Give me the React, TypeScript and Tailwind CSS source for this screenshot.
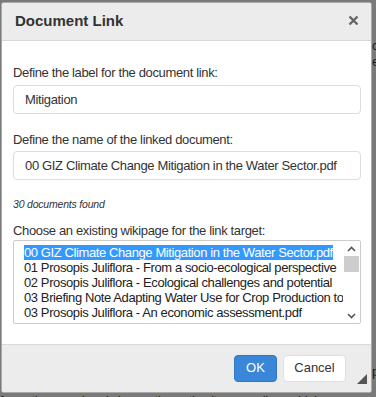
import React from "react";

const items = [
  "00 GIZ Climate Change Mitigation in the Water Sector.pdf",
  "01 Prosopis Juliflora - From a socio-ecological perspective",
  "02 Prosopis Juliflora - Ecological challenges and potential",
  "03 Briefing Note Adapting Water Use for Crop Production to",
  "03 Prosopis Juliflora - An economic assessment.pdf",
  "04 Briefing Note Effective Agricultural Water Management F",
];

export default function App() {
  return (
    <div
      className="relative w-[376px] h-[397px] overflow-hidden bg-[#7a7a7a]"
      style={{ fontFamily: '"Liberation Sans", Arial, sans-serif' }}
    >
      {/* background page text under overlay */}
      <div className="absolute left-0 top-[391px] whitespace-nowrap text-[13px] tracking-[-0.35px] text-[#1a1a1a]">
        formation panel and choose the option 'temporarily enable'
      </div>
      <div className="absolute left-[372px] top-[38px] whitespace-nowrap text-[13px] leading-[16px] text-[#1a1a1a]">
        c<br />e
      </div>
      <div className="absolute left-[372px] top-[362px] whitespace-nowrap text-[13px] text-[#1a1a1a]">p</div>

      <div className="absolute left-[1px] top-[2px] w-[371px] h-[391px] flex flex-col bg-white border border-[#aaa] rounded-[3px] overflow-hidden">
        {/* Title bar */}
        <div className="h-[38px] shrink-0 flex items-center justify-between bg-[#ececec] border-b border-[#d8d8d8] pl-[13px] pr-[12px]">
          <span className="text-[15px] font-bold text-[#333]">Document Link</span>
          <svg width="11" height="11" viewBox="0 0 11 11" className="mt-[-2px]">
            <path d="M1.5 1.5 L9.5 9.5 M9.5 1.5 L1.5 9.5" stroke="#666" strokeWidth="2.4" strokeLinecap="butt" />
          </svg>
        </div>

        {/* Body */}
        <div className="flex-1 flex flex-col pl-[11px] pr-[10px] pt-[24px] text-[#333] tracking-[-0.35px]">
          <label className="text-[13px] leading-[16px]">Define the label for the document link:</label>
          <div className="mt-[4px] h-[29px] flex items-center border border-[#ddd] rounded-[4px] px-[11px] text-[13px]">
            Mitigation
          </div>

          <label className="mt-[18px] text-[13px] leading-[16px]">Define the name of the linked document:</label>
          <div className="mt-[3px] h-[29px] flex items-center border border-[#ddd] rounded-[4px] px-[11px] text-[13px] whitespace-nowrap">
            00 GIZ Climate Change Mitigation in the Water Sector.pdf
          </div>

          <div className="mt-[18px] text-[10.5px] italic leading-[12px] text-[#333] tracking-[-0.2px]">30 documents found</div>

          <label className="mt-[13px] text-[13px] leading-[16px]">Choose an existing wikipage for the link target:</label>
          <div className="mt-[1px] h-[84px] flex border border-[#ccc] rounded-[2px] overflow-hidden">
            <div className="flex-1 overflow-hidden pl-[10px] pt-[4px]">
              {items.map((t, i) => (
                <div
                  key={i}
                  className={
                    "h-[15px] leading-[15px] text-[13px] tracking-[-0.4px] whitespace-nowrap " +
                    (i === 0 ? "" : "text-[#222]")
                  }
                >
                  <span className={i === 0 ? "bg-[#3399ff] text-white" : ""}>{t}</span>
                </div>
              ))}
            </div>
            <div className="w-[16px] shrink-0 flex flex-col items-center bg-white mr-[1px]">
              <div className="h-[15px] flex items-center justify-center">
                <svg width="9" height="6" viewBox="0 0 9 6">
                  <path d="M1 5 L4.5 1.5 L8 5" stroke="#555" strokeWidth="1.6" fill="none" />
                </svg>
              </div>
              <div className="w-[15px] h-[16px] bg-[#cdcdcd]" />
              <div className="flex-1" />
              <div className="h-[15px] flex items-center justify-center">
                <svg width="9" height="6" viewBox="0 0 9 6">
                  <path d="M1 1 L4.5 4.5 L8 1" stroke="#555" strokeWidth="1.6" fill="none" />
                </svg>
              </div>
            </div>
          </div>
        </div>

        {/* Footer */}
        <div className="relative h-[48px] shrink-0 flex items-center justify-end gap-[6px] bg-[#ececec] border-t border-[#d8d8d8] pr-[25px] pb-[1px]">
          <button className="h-[27px] w-[43px] rounded-[4px] bg-[#3a87d9] text-white text-[13px] border border-[#2f78c7]">
            OK
          </button>
          <button className="h-[27px] w-[63px] rounded-[4px] bg-white text-[#333] text-[13px] border border-[#e0e0e0]">
            Cancel
          </button>
          <svg className="absolute right-[4px] bottom-[8px]" width="10" height="10" viewBox="0 0 10 10">
            <path d="M10 0 L10 10 L0 10 Z" fill="#555" />
          </svg>
        </div>
      </div>
    </div>
  );
}
